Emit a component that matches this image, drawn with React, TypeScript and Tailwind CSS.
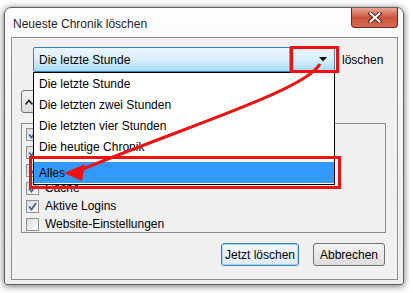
import React from "react";

const font = { fontFamily: '"Liberation Sans", Arial, sans-serif' };

const rows = [
  { label: "Besuchte Seiten & Download-Chronik", checked: true },
  { label: "Formular- & Suchchronik", checked: true },
  { label: "Cookies", checked: true },
  { label: "Cache", checked: true },
  { label: "Aktive Logins", checked: true },
  { label: "Website-Einstellungen", checked: false },
];

const options = [
  "Die letzte Stunde",
  "Die letzten zwei Stunden",
  "Die letzten vier Stunden",
  "Die heutige Chronik",
];

function Checkbox({ checked }: { checked: boolean }) {
  return (
    <span className="flex h-[13px] w-[13px] shrink-0 items-center justify-center border border-[#8e8f8f] bg-gradient-to-br from-[#dcdcdc] to-[#fbfbfb]">
      {checked ? (
        <svg width="9" height="9" viewBox="0 0 9 9" aria-hidden="true">
          <path d="M1 4.5 L3.5 7.5 L8 1" fill="none" stroke="#4a5f97" strokeWidth="1.8" />
        </svg>
      ) : null}
    </span>
  );
}

function CloseButton() {
  return (
    <div className="flex h-[20px] w-[47px] items-center justify-center rounded-b-[4px] border border-t-0 border-[#6d2a1e] bg-gradient-to-b from-[#e9a899] via-[#c9533c] to-[#d46a52]">
      <svg width="14" height="11" viewBox="0 0 14 11" aria-hidden="true">
        <path d="M2.5 1.5 L11.5 9.5 M11.5 1.5 L2.5 9.5" stroke="#5a2318" strokeWidth="4" strokeLinecap="square" />
        <path d="M2.5 1.5 L11.5 9.5 M11.5 1.5 L2.5 9.5" stroke="#ffffff" strokeWidth="2" strokeLinecap="square" />
      </svg>
    </div>
  );
}

export default function App() {
  return (
    <div className="relative h-[293px] w-[413px] overflow-hidden bg-white text-[12px] text-black" style={font}>
      <div className="ml-[4px] mt-[7px] flex h-[278px] w-[400px] flex-col rounded-t-[7px] rounded-b-[3px] border border-[#5f5f5f] bg-gradient-to-b from-[#fdfdfd] to-[#ededed] shadow-[0_1px_7px_rgba(0,0,0,0.6)]">
        <div className="flex h-[29px] shrink-0 items-start justify-between pl-[8px] pr-[5px]">
          <span className="mt-[7px] text-[12px] text-[#1e1e1e]">Neueste Chronik löschen</span>
          <CloseButton />
        </div>
        <div className="ml-[6px] flex h-[243px] w-[387px] flex-col border border-[#8d8d8d] bg-[#f0f0f0] pl-[9px] pr-[11px] pt-[9px]">
          <div className="flex h-[25px] items-center">
            <div className="ml-[12px] flex h-[25px] w-[302px] rounded-[2px] border border-[#3c7fb1] bg-gradient-to-b from-[#eaf6fd] via-[#d9f0fc] to-[#a7d9f5]">
              <div className="flex flex-1 items-center pl-[5px]">Die letzte Stunde</div>
              <div className="flex w-[45px] items-center justify-end border-l border-[#6ca8d3] pr-[7px]">
                <svg width="8" height="5" viewBox="0 0 8 5" aria-hidden="true">
                  <path d="M0 0 H8 L4 4.5 Z" fill="#111" />
                </svg>
              </div>
            </div>
            <span className="ml-[7px]">löschen</span>
          </div>
          <div className="mt-[18px] flex h-[23px] w-[80px] items-center rounded-[3px] border border-[#707070] bg-gradient-to-b from-[#f2f2f2] to-[#dcdcdc] pl-[3px]">
            <svg width="8" height="8" viewBox="0 0 8 8" aria-hidden="true">
              <path d="M0.5 6.5 L4 2.5 L7.5 6.5" fill="none" stroke="#222" strokeWidth="1.6" />
            </svg>
            <span className="ml-[4px]">Details</span>
          </div>
          <div className="mt-[10px] flex h-[110px] flex-col border border-[#8a8a8a] pl-[4px] pt-[1px]">
            {rows.map((row) => (
              <div className="flex h-[18px] items-center gap-[6px]" key={row.label}>
                <Checkbox checked={row.checked} />
                <span>{row.label}</span>
              </div>
            ))}
          </div>
          <div className="mt-[10px] flex justify-end gap-[14px] pr-[1px]">
            <button
              className="h-[23px] w-[78px] rounded-[3px] border border-[#3c7fb1] bg-gradient-to-b from-[#f4f9fd] to-[#dcecf7] shadow-[inset_0_0_0_1px_#a6d6f4]"
              type="button"
            >
              Jetzt löschen
            </button>
            <button
              className="h-[23px] w-[72px] rounded-[3px] border border-[#707070] bg-gradient-to-b from-[#f3f3f3] to-[#dddddd]"
              type="button"
            >
              Abbrechen
            </button>
          </div>
        </div>
      </div>

      {/* dropdown menu */}
      <div className="absolute left-[33px] top-[72px] flex h-[113px] w-[302px] flex-col border border-black bg-white">
        {options.map((label) => (
          <div className="flex h-[21px] items-center pl-[5px]" key={label}>
            {label}
          </div>
        ))}
        <div className="mt-[5px] flex h-[21px] items-center bg-[#3399ff] pl-[5px]">Alles</div>
      </div>

      {/* annotations */}
      <div className="absolute left-[290px] top-[46px] h-[27px] w-[49px] border-[3px] border-[#ee1111]" />
      <div className="absolute left-[29px] top-[156px] h-[33px] w-[312px] border-[3px] border-[#ee1111]" />
      <svg className="absolute left-0 top-0" width="413" height="293" aria-hidden="true">
        <path d="M320 64 C 305 90, 190 125, 78 171" fill="none" stroke="#ee1111" strokeWidth="3" />
        <path d="M64 173 L85 164 L82 181 Z" fill="#ee1111" />
      </svg>
    </div>
  );
}
